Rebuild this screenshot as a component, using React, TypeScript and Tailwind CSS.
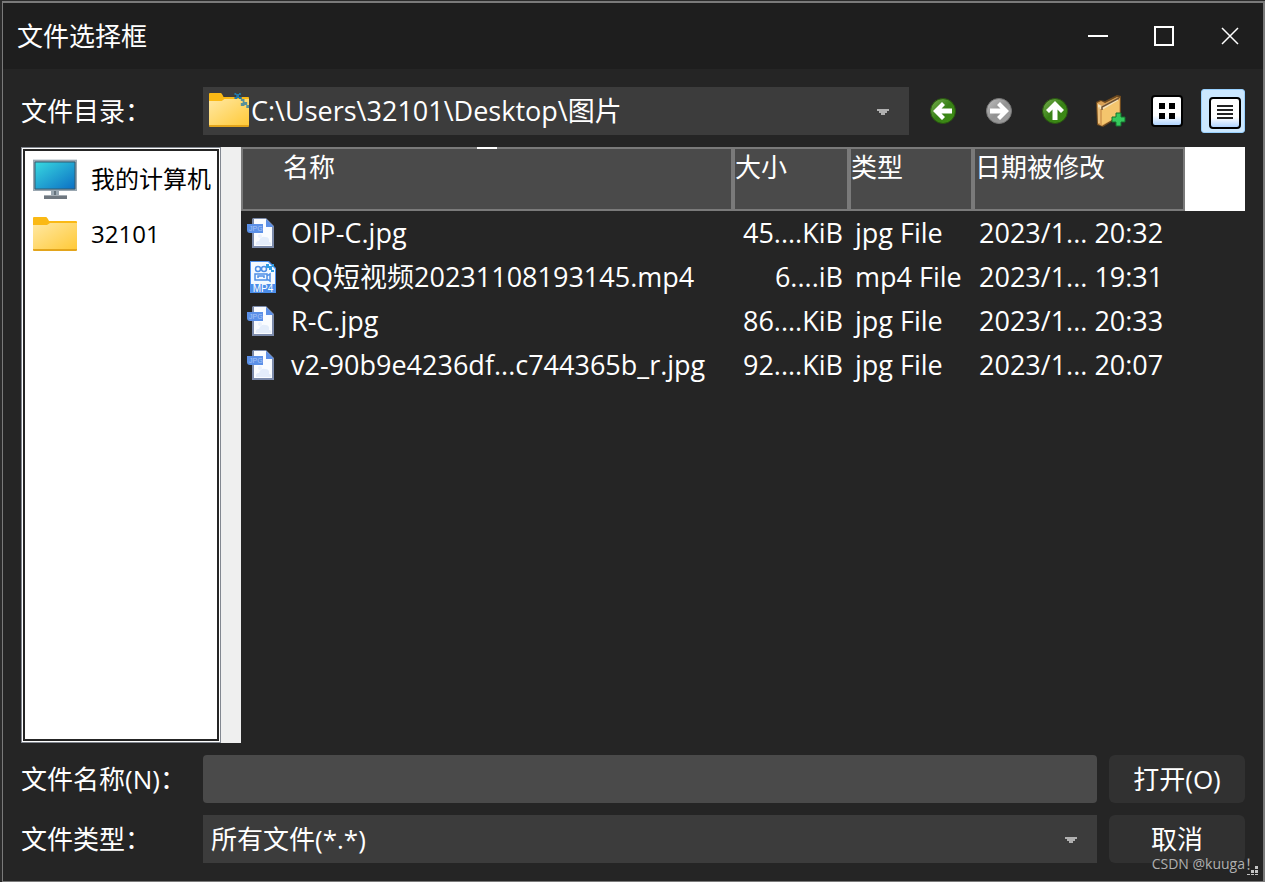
import React, { useState } from 'react';

interface FileRow {
  kind: 'jpg' | 'mp4';
  name: string;
  size: string;
  type: string;
  modified: string;
}

const files: FileRow[] = [
  { kind: 'jpg', name: 'OIP-C.jpg', size: '45....KiB', type: 'jpg File', modified: '2023/1... 20:32' },
  { kind: 'mp4', name: 'QQ短视频20231108193145.mp4', size: '6....iB', type: 'mp4 File', modified: '2023/1... 19:31' },
  { kind: 'jpg', name: 'R-C.jpg', size: '86....KiB', type: 'jpg File', modified: '2023/1... 20:33' },
  { kind: 'jpg', name: 'v2-90b9e4236df...c744365b_r.jpg', size: '92....KiB', type: 'jpg File', modified: '2023/1... 20:07' },
];

const FolderIcon = ({ className, linked }: { className: string; linked?: boolean }) => (
  <svg className={className} viewBox="0 0 44 34" preserveAspectRatio="none" aria-hidden="true">
    <defs>
      <linearGradient id="folder" x1="0" y1="0" x2="1" y2="1">
        <stop offset="0" stopColor="#ffe8a3" />
        <stop offset="1" stopColor="#ffc937" />
      </linearGradient>
    </defs>
    <path d="M0 1q0-1 1-1h12q1 0 3 4h27q1 0 1 1v4H0z" fill="#fab915" />
    <path d="M0 8h14l3-2h27v27H0z" fill="url(#folder)" />
    <path d="M0 32h44v1q0 1-1 1H1q-1 0-1-1z" fill="#e3a51c" />
    {linked && (
      <g fill="#2278a8">
        <path d="M28 0h2v1h3V0h2v2h-2v2h3v2h-3V5h-2v1h-3V4h2V2h-2z" />
        <path d="M35 6h4v3h3v3h2v3h-3v-3h-2v1h-4v-3h2V8h-2z" opacity=".75" />
      </g>
    )}
  </svg>
);

const ComputerIcon = () => (
  <svg className="h-10 w-11" viewBox="0 0 44 40" aria-hidden="true">
    <defs>
      <linearGradient id="screen" x1="0" y1="0" x2="1" y2="1">
        <stop offset="0" stopColor="#38d9e0" />
        <stop offset="1" stopColor="#0c6fc4" />
      </linearGradient>
    </defs>
    <path d="M0 1h44v31H0z" fill="#9aa7b1" />
    <path d="M0 0h44v1H0z" fill="#dce2e6" />
    <path d="M2 3h40v27H2z" fill="url(#screen)" stroke="#315b70" strokeWidth="1" />
    <path d="M18 32h8v4h-8z" fill="#9aa7b1" />
    <path d="M21 32h2v4h-2z" fill="#65727c" />
    <path d="M11 36h23v4H11z" fill="#6f777f" />
    <path d="M11 36h23v1H11z" fill="#a5adb4" />
  </svg>
);

const JpgIcon = () => (
  <svg className="h-8 w-8" viewBox="0 0 32 32" aria-hidden="true">
    <path d="M8 1h13l8 8v22H7V2z" fill="#7c8bab" />
    <path d="M9 2h12l6 7v20H9z" fill="#fafcff" />
    <path d="M21 2l7 7v1h-7z" fill="#5c8fe6" />
    <path d="M11 28q-1-4 3-4 2-5 6-4 5 0 4 5 3 0 2 3z" fill="#e4edfb" />
    <circle cx="15" cy="19" r="2" fill="#eaf1fd" />
    <path d="M2 7h16v9H5q-3 0-3-3z" fill="#5b90e8" />
    <text x="4" y="14" fontSize="7" fontFamily="Liberation Sans" fill="#a9c5f5">JPG</text>
  </svg>
);

const Mp4Icon = () => (
  <svg className="h-8 w-8" viewBox="0 0 32 32" aria-hidden="true">
    <path d="M5 0h19l7 7v25H5z" fill="#4b8eea" />
    <path d="M6 1h17l7 7v15H6z" fill="#f3f9ff" />
    <g fill="none" stroke="#4f8fe6" strokeWidth="1.5">
      <circle cx="13" cy="8" r="2.5" />
      <circle cx="19" cy="8" r="2.5" />
      <path d="M10 13h12v6H10zM22 15l3-2v7l-3-2M13 17v-2h6v2" />
    </g>
    <path d="M21 3h3v2h3V3h2v3h-2v3h2v2h-3V9h-2V7h-3z" fill="#329de2" />
    <text x="18" y="31" fontSize="10" textAnchor="middle" fontFamily="Liberation Sans" fill="#fff">MP4</text>
  </svg>
);

const ArrowIcon = ({ color, turn }: { color: 'green' | 'gray'; turn: number }) => (
  <svg className="h-7 w-7" viewBox="0 0 28 28" aria-hidden="true">
    <defs>
      <linearGradient id={'ball-' + color} x1="0" y1="0" x2="1" y2="1">
        <stop offset="0" stopColor={color === 'green' ? '#78ad50' : '#c0c0c0'} />
        <stop offset=".5" stopColor={color === 'green' ? '#388116' : '#929292'} />
        <stop offset="1" stopColor={color === 'green' ? '#3f8f14' : '#a0a0a0'} />
      </linearGradient>
    </defs>
    <circle
      cx="14"
      cy="14"
      r="12.5"
      fill={'url(#ball-' + color + ')'}
      stroke={color === 'green' ? '#28560f' : '#777'}
      strokeWidth="1"
    />
    <path
      d="M4 14l9-9 3 3-3.500 3.500H23v5H12.500L16 20l-3 3z"
      fill="#fff"
      transform={'rotate(' + turn + ' 14 14)'}
    />
  </svg>
);

const NewFolderIcon = () => (
  <svg className="h-8 w-8" viewBox="0 0 32 32" aria-hidden="true">
    <path d="M1 7l4-2 5 1L22 0l4 1v20L8 32l-6-2z" fill="#6e4a1f" />
    <path d="M2 8l4-2 4 2 12-6 3 1v17L7 31l-4-2z" fill="#d9a155" />
    <path d="M3 9l4 2 16-8v4L8 15l-5-2z" fill="#f5e3bb" />
    <path d="M7 15l17-10v16L7 30z" fill="#f4c56d" />
    <path d="M7 15V12l17-9" fill="none" stroke="#6f5233" strokeWidth="1.5" />
    <path d="M4 12v16" stroke="#f0cb8b" strokeWidth="1.5" />
    <path d="M21 18h5v4h4v5h-4v4h-5v-4h-4v-5h4z" fill="#35c95c" stroke="#17702f" strokeWidth="1" />
  </svg>
);

const ViewIcon = ({ mode }: { mode: 'grid' | 'list' }) => (
  <svg className="h-8 w-8" viewBox="0 0 32 32" aria-hidden="true">
    <defs>
      <linearGradient id="tile" x1="0" y1="0" x2="0" y2="1">
        <stop offset=".65" stopColor="#fff" />
        <stop offset="1" stopColor="#a8d0ff" />
      </linearGradient>
    </defs>
    <rect x="1" y="1" width="30" height="30" rx="3" fill="url(#tile)" stroke="#000" strokeWidth="2" />
    {mode === 'grid' ? (
      <path d="M8 8h6v6H8zM18 8h6v6h-6zM8 18h6v6H8zM18 18h6v6h-6z" fill="#000" />
    ) : (
      <path d="M8 8h16v2H8zM8 12h16v2H8zM8 16h16v2H8zM8 20h16v2H8z" fill="#222" />
    )}
  </svg>
);

const Caret = () => (
  <svg className="pointer-events-none absolute right-5 top-5 h-2 w-3" viewBox="0 0 12 8" aria-hidden="true">
    <path d="M0 2h12v2h-2v2H8v2H4V6H2V4H0z" fill="#b0b0b0" />
  </svg>
);

const TitleBar = () => (
  <header className="flex h-[66px] shrink-0 items-center justify-between bg-[#1e1e1e] pl-[14px]">
    <h1 className="text-[26px] leading-8">文件选择框</h1>
    <div className="flex">
      <button type="button" aria-label="最小化" className="flex h-[66px] w-[66px] items-center justify-center">
        <svg className="h-5 w-5" viewBox="0 0 20 20"><path d="M0 10h20" stroke="#fff" strokeWidth="2" /></svg>
      </button>
      <button type="button" aria-label="最大化" className="flex h-[66px] w-[66px] items-center justify-center">
        <svg className="h-5 w-5" viewBox="0 0 20 20"><path d="M1 1h18v18H1z" fill="none" stroke="#fff" strokeWidth="2" /></svg>
      </button>
      <button type="button" aria-label="关闭" className="flex h-[66px] w-[66px] items-center justify-center">
        <svg className="h-5 w-5" viewBox="0 0 20 20"><path d="M2 2l16 16M18 2L2 18" stroke="#fff" strokeWidth="1.5" /></svg>
      </button>
    </div>
  </header>
);

const headCell = 'border-2 border-[#7a7a7a] bg-[#4a4a4a] p-0 text-left align-top text-[26px] leading-9 font-normal';
const toolButton = 'flex h-11 w-11 items-center justify-center rounded-[3px]';
const pressed = ' border border-[#99d1ff] bg-[#cce8ff] pl-1 pt-1';

export const App: React.FC = () => {
  const [view, setView] = useState<'grid' | 'list'>('list');
  const [fileName, setFileName] = useState('');

  return (
    <div className="flex min-h-screen flex-col bg-[#2b2b2b] pl-[2px] pt-px font-['Open_Sans','Noto_Sans_CJK_SC',sans-serif] text-white">
      <div className="relative flex grow flex-col border border-t-2 border-r-2 border-[#7a7a7a] bg-[#252525]">
        <TitleBar />
        <main className="flex grow flex-col gap-3 p-[18px]">
          <div className="flex items-center">
            <label htmlFor="directory" className="w-[182px] shrink-0 text-[26px] leading-8">文件目录：</label>
            <div className="relative grow">
              <select
                id="directory"
                className="block h-12 w-full appearance-none bg-[#3c3c3c] pl-12 pr-10 text-[27px] leading-9"
              >
                <option>C:\Users\32101\Desktop\图片</option>
              </select>
              <FolderIcon linked className="pointer-events-none absolute left-[6px] top-[6px] h-[34px] w-10" />
              <Caret />
            </div>
            <div className="ml-3 flex gap-3">
              <button type="button" aria-label="后退" className={toolButton}><ArrowIcon color="green" turn={0} /></button>
              <button type="button" aria-label="前进" className={toolButton}><ArrowIcon color="gray" turn={180} /></button>
              <button type="button" aria-label="上级目录" className={toolButton}><ArrowIcon color="green" turn={90} /></button>
              <button type="button" aria-label="新建文件夹" className={toolButton}><NewFolderIcon /></button>
              <button
                type="button"
                aria-label="列表视图"
                onClick={() => setView('grid')}
                className={toolButton + (view === 'grid' ? pressed : '')}
              >
                <ViewIcon mode="grid" />
              </button>
              <button
                type="button"
                aria-label="详细视图"
                onClick={() => setView('list')}
                className={toolButton + (view === 'list' ? pressed : '')}
              >
                <ViewIcon mode="list" />
              </button>
            </div>
          </div>

          <div className="flex grow">
            <aside className="flex w-[200px] shrink-0 border border-[#828790] bg-white p-px">
              <ul className="grow border-2 border-[#252525] text-2xl text-black">
                <li className="flex h-14 items-center gap-[14px] whitespace-nowrap pl-2">
                  <ComputerIcon />
                  我的计算机
                </li>
                <li className="flex h-[54px] items-center gap-[14px] pl-2">
                  <FolderIcon className="h-[34px] w-11" />
                  32101
                </li>
              </ul>
            </aside>
            <div className="w-5 shrink-0 bg-[#efefef]" />
            <div className="relative grow">
              <div className="absolute left-[236px] top-0 h-[2px] w-5 bg-white" />
              <table className="w-full table-fixed border-separate border-spacing-0">
                <thead>
                  <tr className="h-16">
                    <th className={headCell + ' pl-10'}>名称</th>
                    <th className={headCell + ' w-[116px]'}>大小</th>
                    <th className={headCell + ' w-[124px]'}>类型</th>
                    <th className={headCell + ' w-[212px]'}>日期被修改</th>
                    <td className="w-[60px] bg-white p-0" />
                  </tr>
                </thead>
                <tbody className="text-[27px] leading-[44px]">
                  {files.map((file) => (
                    <tr key={file.name} className="h-11 whitespace-nowrap">
                      <td className="p-0 pl-1">
                        <div className="flex h-11 items-center gap-[14px]">
                          {file.kind === 'jpg' ? <JpgIcon /> : <Mp4Icon />}
                          {file.name}
                        </div>
                      </td>
                      <td className="p-0 pr-[6px] text-right">{file.size}</td>
                      <td className="p-0 pl-[6px]">{file.type}</td>
                      <td className="p-0 pl-[6px]">{file.modified}</td>
                      <td className="p-0" />
                    </tr>
                  ))}
                </tbody>
              </table>
            </div>
          </div>

          <div className="flex items-center">
            <label htmlFor="filename" className="w-[182px] shrink-0 text-[26px] leading-8">文件名称(N)：</label>
            <input
              id="filename"
              type="text"
              value={fileName}
              onChange={(e) => setFileName(e.target.value)}
              className="h-12 min-w-0 grow rounded bg-[#4a4a4a] px-2 text-[26px]"
            />
            <button type="button" className="ml-3 h-12 w-[136px] shrink-0 rounded-md bg-[#313131] text-[26px]">打开(O)</button>
          </div>
          <div className="flex items-center">
            <label htmlFor="filetype" className="w-[182px] shrink-0 text-[26px] leading-8">文件类型：</label>
            <div className="relative grow">
              <select
                id="filetype"
                className="block h-12 w-full appearance-none bg-[#3c3c3c] pl-2 pr-10 text-[26px] leading-9"
              >
                <option>所有文件(*.*)</option>
              </select>
              <Caret />
            </div>
            <button type="button" className="ml-3 h-12 w-[136px] shrink-0 rounded-md bg-[#313131] text-[26px]">取消</button>
          </div>
        </main>
        <div className="pointer-events-none absolute bottom-[7px] right-1 text-[14px] leading-5 text-[#b0b0b0]">CSDN @kuuga！</div>
        <svg className="absolute bottom-1 right-1 h-3 w-3" viewBox="0 0 12 12" aria-hidden="true">
          <path d="M8 1h3v3H8zM4 5h3v3H4zM8 5h3v3H8zM0 9h3v1H0zM4 9h3v1H4zM8 9h3v1H8z" fill="#c4c4c4" />
        </svg>
      </div>
    </div>
  );
};

export default App;
